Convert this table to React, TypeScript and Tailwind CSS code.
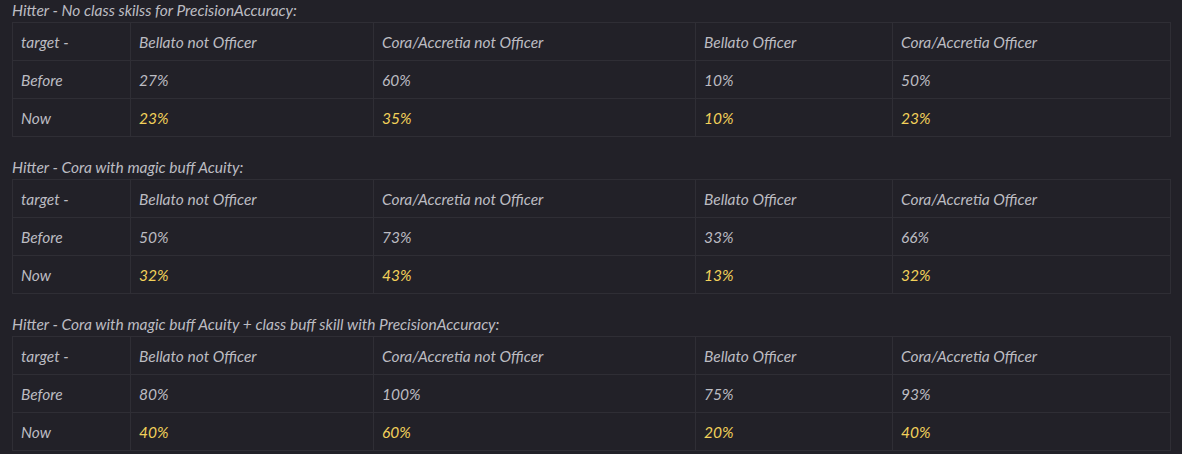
import React from "react";

interface Section {
  title: string;
  before: string[];
  now: string[];
}

const headers = ["Bellato not Officer", "Cora/Accretia not Officer", "Bellato Officer", "Cora/Accretia Officer"];

const sections: Section[] = [
  {
    title: "Hitter - No class skilss for PrecisionAccuracy:",
    before: ["27%", "60%", "10%", "50%"],
    now: ["23%", "35%", "10%", "23%"],
  },
  {
    title: "Hitter - Cora with magic buff Acuity:",
    before: ["50%", "73%", "33%", "66%"],
    now: ["32%", "43%", "13%", "32%"],
  },
  {
    title: "Hitter - Cora with magic buff Acuity + class buff skill with PrecisionAccuracy:",
    before: ["80%", "100%", "75%", "93%"],
    now: ["40%", "60%", "20%", "40%"],
  },
];

const cell = "border border-[#2f2e35] px-2 py-0 text-left align-middle font-normal leading-[20px]";
const row = "h-[38px]";

function StatsTable({ section }: { section: Section }) {
  return (
    <div>
      <div className="h-[22px] leading-[20px] text-[15.5px] text-[#bcbcc2]">{section.title}</div>
      <table className="w-[1158px] table-fixed border-collapse text-[15.5px] text-[#bcbcc2]">
        <colgroup>
          <col className="w-[118px]" />
          <col className="w-[243px]" />
          <col className="w-[322px]" />
          <col className="w-[197px]" />
          <col className="w-[278px]" />
        </colgroup>
        <tbody>
          <tr className={row}>
            <td className={cell}>target -</td>
            {headers.map((h) => (
              <td key={h} className={cell}>{h}</td>
            ))}
          </tr>
          <tr className={row}>
            <td className={cell}>Before</td>
            {section.before.map((v, i) => (
              <td key={i} className={cell}>{v}</td>
            ))}
          </tr>
          <tr className={row}>
            <td className={cell}>Now</td>
            {section.now.map((v, i) => (
              <td key={i} className={`${cell} text-[#f2d15a]`}>{v}</td>
            ))}
          </tr>
        </tbody>
      </table>
    </div>
  );
}

export default function App() {
  return (
    <div className="min-h-screen bg-[#222128] pl-3 italic font-['Lato','Liberation_Sans',sans-serif]">
      <div className="flex flex-col gap-[20px]">
        {sections.map((s) => (
          <StatsTable key={s.title} section={s} />
        ))}
      </div>
    </div>
  );
}
